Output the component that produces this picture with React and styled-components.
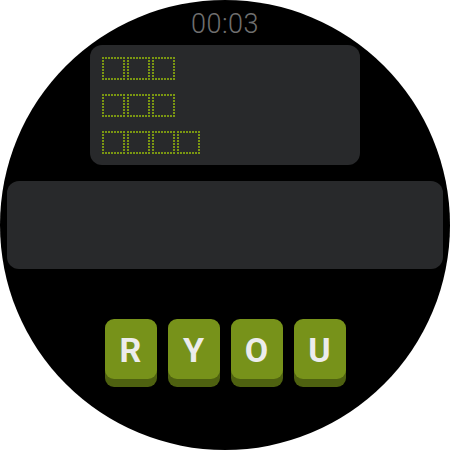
import React from "react";
import styled, { createGlobalStyle } from "styled-components";

const Global = createGlobalStyle`
  html, body {
    margin: 0;
    padding: 0;
    background: #ffffff;
    font-family: Roboto, "Liberation Sans", sans-serif;
  }
`;

const Watch = styled.div`
  width: 450px;
  height: 450px;
  border-radius: 50%;
  background: #000000;
  overflow: hidden;
  display: flex;
  flex-direction: column;
  align-items: center;
`;

const Timer = styled.div`
  height: 45px;
  display: flex;
  align-items: center;
  justify-content: center;
  font-size: 27px;
  font-weight: 300;
  color: #6f6f6f;
  letter-spacing: 0.5px;
  padding-top: 2px;
  box-sizing: border-box;
`;

const WordPanel = styled.div`
  width: 270px;
  height: 120px;
  box-sizing: border-box;
  padding: 12px 12px 11px;
  background: #28292b;
  border-radius: 12px;
  display: flex;
  flex-direction: column;
  gap: 14px;
`;

const Row = styled.div`
  display: flex;
  gap: 2px;
`;

const dashH = "repeating-linear-gradient(90deg, #7a9612 0 2px, transparent 2px 3px)";
const dashV = "repeating-linear-gradient(180deg, #7a9612 0 2px, transparent 2px 3px)";

const Slot = styled.div`
  width: 23px;
  height: 23px;
  background:
    ${dashH} top left / 100% 2px no-repeat,
    ${dashH} bottom left / 100% 2px no-repeat,
    ${dashV} top left / 2px 100% no-repeat,
    ${dashV} top right / 2px 100% no-repeat;
`;

const GuessPanel = styled.div`
  margin-top: 16px;
  width: 436px;
  height: 88px;
  background: #28292b;
  border-radius: 12px;
`;

const Keys = styled.div`
  margin-top: 50px;
  display: flex;
  gap: 11px;
`;

const Key = styled.div`
  width: 52px;
  height: 60px;
  border-radius: 9px;
  background: #77921a;
  box-shadow: 0 8px 0 #4e6110;
  display: flex;
  align-items: center;
  justify-content: center;
  font-size: 34px;
  font-weight: 700;
  color: #ececec;
  padding-top: 2px;
  box-sizing: border-box;
`;

const rows = [3, 3, 4];
const letters = ["R", "Y", "O", "U"];

export default function App() {
  return (
    <>
      <Global />
      <Watch>
        <Timer>00:03</Timer>
        <WordPanel>
          {rows.map((n, i) => (
            <Row key={i}>
              {Array.from({ length: n }).map((_, j) => (
                <Slot key={j} />
              ))}
            </Row>
          ))}
        </WordPanel>
        <GuessPanel />
        <Keys>
          {letters.map((l, i) => (
            <Key key={i}>{l}</Key>
          ))}
        </Keys>
      </Watch>
    </>
  );
}
